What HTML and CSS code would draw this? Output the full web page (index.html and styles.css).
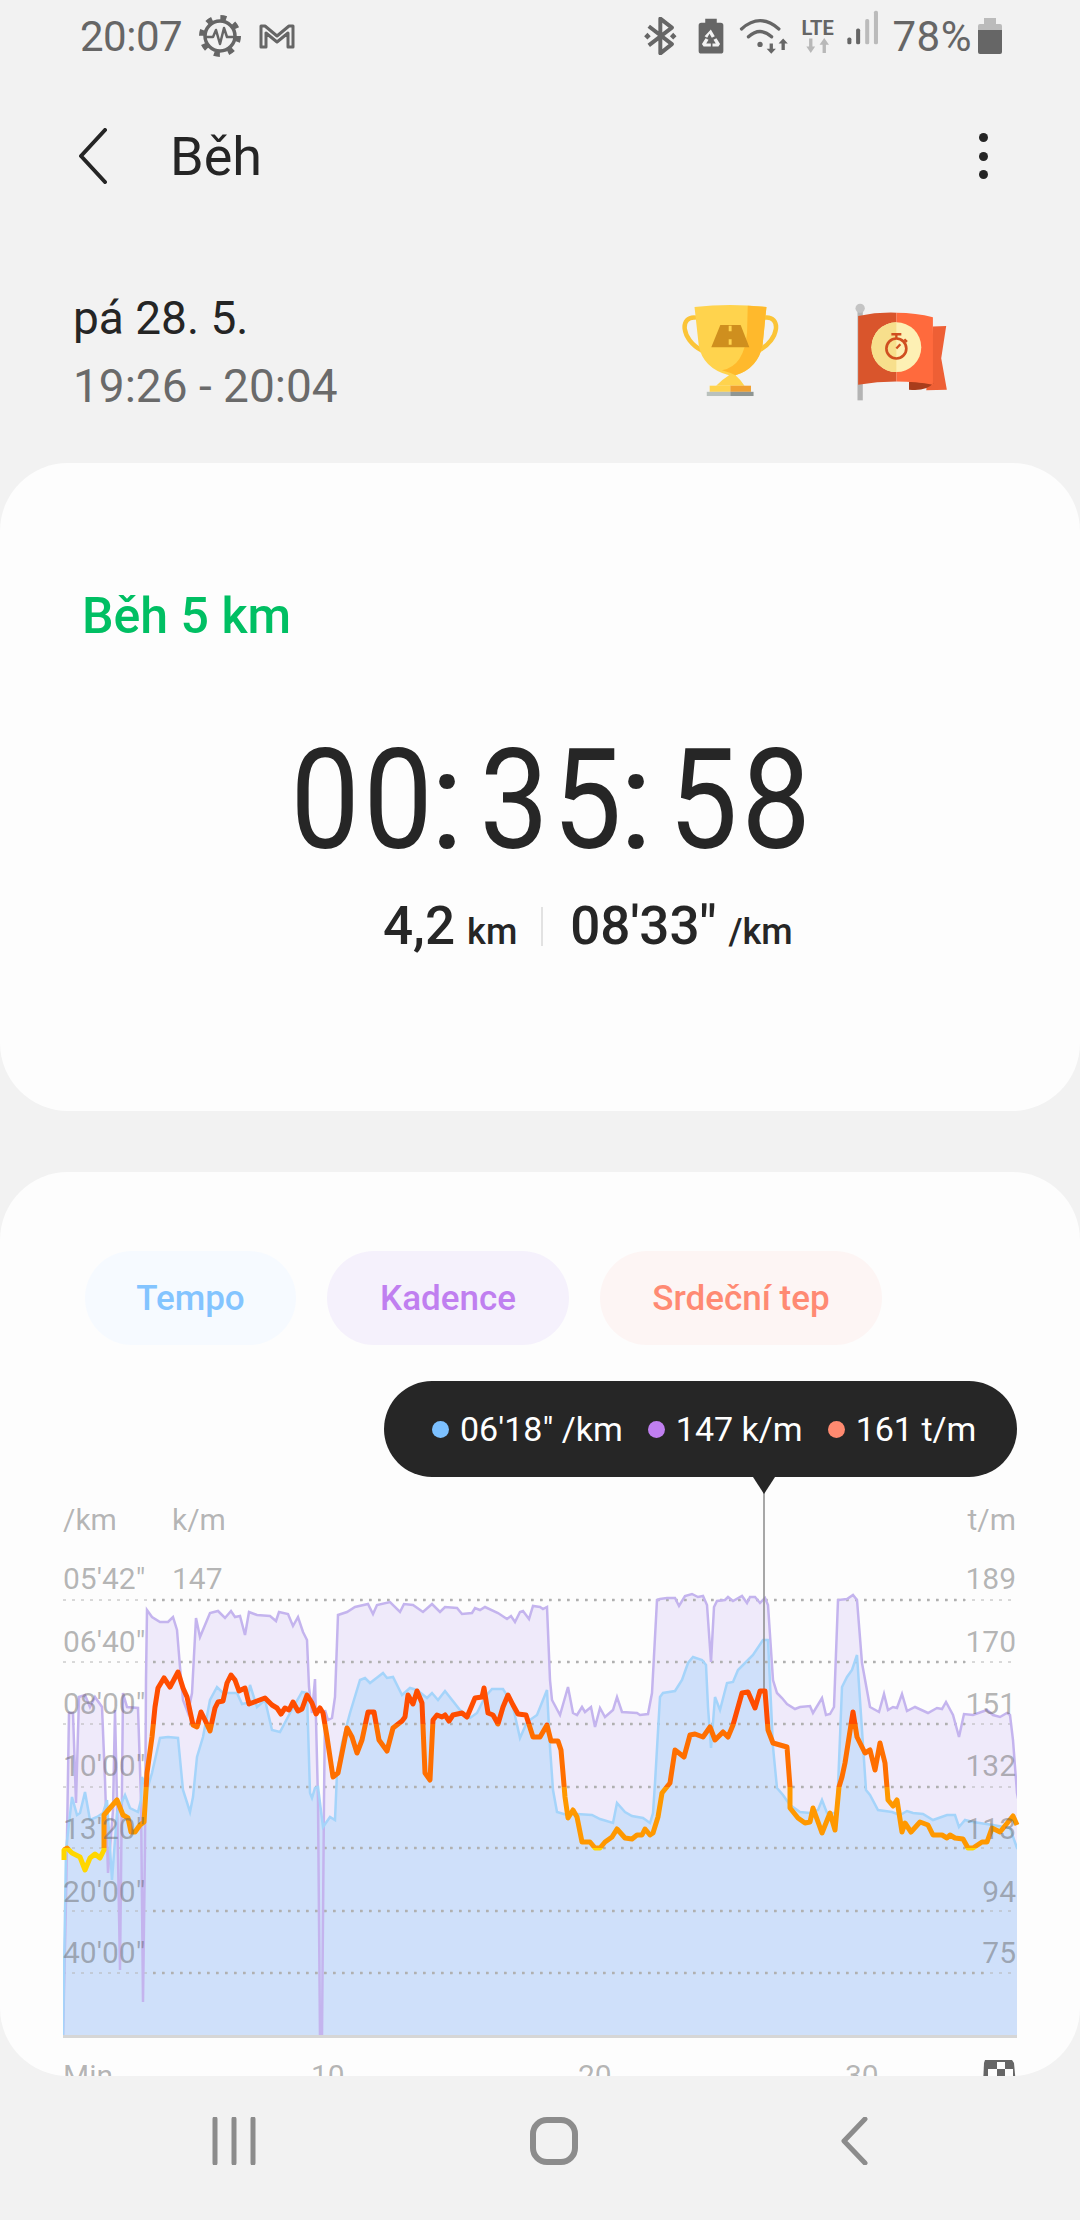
FILE: index.html
```html
<!DOCTYPE html>
<html lang="cs">
<head>
    <meta charset="UTF-8">
    <meta name="viewport" content="width=device-width, initial-scale=1.0">
    <title>Běh</title>
    <link rel="stylesheet" href="styles.css">
</head>
<body>
    <div class="status-bar">
        <div class="status-group">
            <span class="status-time">20:07</span>
            <svg class="icon-gear" viewBox="0 0 44 44">
                <circle cx="22" cy="22" r="15" fill="none" stroke="#666" stroke-width="3.5"/>
                <circle cx="22" cy="22" r="18.5" fill="none" stroke="#666" stroke-width="5" stroke-dasharray="6 8.5"/>
                <polyline points="7,23 15,23 18,16 22,30 26,14 29,23 37,23" fill="none" stroke="#666" stroke-width="2.5" stroke-linejoin="round"/>
            </svg>
            <svg class="icon-mail" viewBox="0 0 36 26">
                <path d="M2 24V3h4l12 10L30 3h4v21h-5V10L18 19 7 10v14z" fill="none" stroke="#666" stroke-width="3" stroke-linejoin="round"/>
            </svg>
        </div>
        <div class="status-group status-right">
            <svg class="icon-bt" viewBox="105 50 105 115">
                <path d="M125 78 195 132 160 160V55L195 82 125 136" fill="none" stroke="#666" stroke-width="12" stroke-linejoin="round"/>
                <path d="M111 108l10-10 10 10-10 10zM189 108l10-10 10 10-10 10z" fill="#666"/>
            </svg>
            <svg class="icon-saver" viewBox="270 50 85 115">
                <path d="M295 55h35v12h12q8 0 8 8v78q0 8-8 8h-59q-8 0-8-8V75q0-8 8-8h12z" fill="#666"/>
                <path d="M312 88l12 20-9 5-7-12-7 12-8-5zM285 132l11-18 9 5-7 11h14v9h-22zM340 132l-11-18-9 5 7 11h-10v9h18z" fill="#f2f2f2"/>
            </svg>
            <svg class="icon-wifi" viewBox="400 50 150 115">
                <g fill="none" stroke="#666" stroke-width="10" stroke-linecap="round">
                    <path d="M407 86Q463 36 520 86"/>
                    <path d="M428 110Q463 78 498 110"/>
                </g>
                <circle cx="463" cy="133" r="8" fill="#666"/>
                <path d="M492 130h10v16h9l-14 15-14-15h9zM528 150h10v-20h9l-14-15-14 15h9z" fill="#666"/>
            </svg>
            <div class="status-lte">
                <span class="lte-label">LTE</span>
                <svg class="icon-lte" viewBox="595 118 80 50">
                    <path d="M610 122h10v24h8l-13 19-13-19h8zM650 165h10v-24h9l-14-20-14 20h9z" fill="#b8b8b8"/>
                </svg>
            </div>
            <svg class="icon-signal" viewBox="725 58 95 104">
                <rect x="726" y="140" width="12" height="20" rx="5" fill="#666"/>
                <rect x="752" y="113" width="12" height="47" rx="5" fill="#666"/>
                <rect x="779" y="85" width="12" height="75" rx="5" fill="#bbb"/>
                <rect x="805" y="60" width="12" height="100" rx="5" fill="#bbb"/>
            </svg>
            <span class="status-percent">78%</span>
            <svg class="icon-battery" viewBox="0 0 24 36">
                <path d="M6 0h12v6h4q2 0 2 2v4H0V8q0-2 2-2h4z" fill="#bbb"/>
                <path d="M0 12h24v22q0 2-2 2H2q-2 0-2-2z" fill="#666"/>
            </svg>
        </div>
    </div>

    <div class="app-bar">
        <div class="app-bar-left">
            <svg class="icon-back" viewBox="0 0 30 56">
                <polyline points="27,2 3,28 27,54" fill="none" stroke="#252525" stroke-width="4" stroke-linecap="round" stroke-linejoin="round"/>
            </svg>
            <h1 class="app-title">Běh</h1>
        </div>
        <div class="more-menu">
            <span class="more-dot"></span>
            <span class="more-dot"></span>
            <span class="more-dot"></span>
        </div>
    </div>

    <div class="summary-row">
        <div class="summary-date">
            <div class="date-day">pá 28. 5.</div>
            <div class="date-time">19:26 - 20:04</div>
        </div>
        <div class="badges">
            <svg class="badge" viewBox="110 55 310 310">
                <path d="M160 105C108 98 112 172 178 207M372 105C424 98 420 172 354 207" fill="none" stroke="#fbc437" stroke-width="14"/>
                <path d="M155 72Q265 60 378 72L366 190Q352 262 282 284 300 300 310 316H222Q240 298 262 284 180 262 168 190Z" fill="#ffd34d"/>
                <path d="M320 68 378 72 366 190Q352 262 282 284 266 275 240 268 310 255 318 150Z" fill="#ffb92c"/>
                <rect x="202" y="316" width="64" height="19" fill="#ffd34d"/>
                <rect x="266" y="316" width="64" height="19" fill="#f0a030"/>
                <rect x="193" y="335" width="73" height="13" fill="#b9c1bd"/>
                <rect x="266" y="335" width="72" height="13" fill="#8f9693"/>
                <path d="M235 128h63l27 69H207z" fill="#cf8f1e"/>
                <path d="M261 130h9v17h-9zM261 172h9v17h-9z" fill="#ffd34d"/>
            </svg>
            <svg class="badge" viewBox="640 50 300 310">
                <rect x="653" y="85" width="16" height="267" fill="#b4b4b4"/>
                <circle cx="661" cy="75" r="14" fill="#c4c4c4"/>
                <path d="M880 130 920 128 905 225 922 320 860 322Z" fill="#ee5f35"/>
                <path d="M808 295V320Q860 326 882 300Z" fill="#a83d1c"/>
                <path d="M655 98Q712 86 770 88V295Q712 295 655 305Z" fill="#d9552c"/>
                <path d="M770 88Q830 88 880 102V305Q830 295 770 295Z" fill="#ff6a3d"/>
                <circle cx="770" cy="192" r="75" fill="#fdf0b4"/>
                <path d="M770 117a75 75 0 0 0 0 150z" fill="#f7df8c"/>
                <circle cx="770" cy="196" r="30" fill="none" stroke="#d04f20" stroke-width="8"/>
                <path d="M755 153h30M770 153v14M794 168l8 8M770 196l12-13" fill="none" stroke="#d04f20" stroke-width="7"/>
            </svg>
        </div>
    </div>

    <div class="card result-card">
        <div class="result-title">Běh 5 km</div>
        <div class="clock">
            <span class="clock-digit">0</span><span class="clock-digit">0</span><span class="clock-sep">:</span><span class="clock-digit">3</span><span class="clock-digit">5</span><span class="clock-sep">:</span><span class="clock-digit">5</span><span class="clock-digit">8</span>
        </div>
        <div class="result-stats">
            <span class="stat-value">4,2</span>
            <span class="stat-unit">km</span>
            <span class="stat-divider"></span>
            <span class="stat-value">08'33"</span>
            <span class="stat-unit">/km</span>
        </div>
    </div>

    <div class="card chart-card">
        <div class="pills">
            <div class="pill pill-tempo">Tempo</div>
            <div class="pill pill-cadence">Kadence</div>
            <div class="pill pill-heart">Srdeční tep</div>
        </div>

        <div class="chart-tooltip">
            <div class="tooltip-item"><span class="tooltip-dot dot-tempo"></span>06'18" /km</div>
            <div class="tooltip-item"><span class="tooltip-dot dot-cadence"></span>147 k/m</div>
            <div class="tooltip-item"><span class="tooltip-dot dot-heart"></span>161 t/m</div>
        </div>

        <!-- viewBox uses page coordinates so the traced points stay readable -->
        <svg class="chart" viewBox="0 1480 1080 620">
            <defs>
                <clipPath id="plot-clip"><rect x="63" y="1480" width="954" height="558"/></clipPath>
                <linearGradient id="heart-gradient" gradientUnits="userSpaceOnUse" x1="0" y1="1600" x2="0" y2="1900">
                    <stop offset="0.4133" stop-color="#ff4d00"/>
                    <stop offset="0.4133" stop-color="#ff6f00"/>
                    <stop offset="0.6233" stop-color="#ff6f00"/>
                    <stop offset="0.6233" stop-color="#ff9800"/>
                    <stop offset="0.8267" stop-color="#ff9800"/>
                    <stop offset="0.8267" stop-color="#ffd600"/>
                </linearGradient>
                <polygon id="cadence-shape" points="63,2037 66,1900 69,1713 73,1713 76,1803 79,1697 85,1695 90,1707 95,1697 102,1707 105,1780 108,1873 113,1810 115,1710 117,1800 120,1970 123,1693 127,1707 138,1708 141,1800 143,2002 145,1847 146,1680 147,1610 152,1617 160,1622 168,1622 173,1617 177,1630 180,1667 183,1700 188,1713 192,1693 196,1618 200,1637 210,1613 218,1611 225,1618 231,1611 235,1617 240,1616 245,1635 249,1612 257,1615 270,1616 276,1621 279,1612 288,1614 293,1626 298,1617 303,1632 307,1640 309,1687 312,1713 315,1679 318,1800 320,2037 322,2037 324,1800 325,1710 328,1720 332,1718 335,1697 338,1615 347,1612 355,1607 368,1604 373,1614 377,1605 390,1602 400,1612 404,1604 413,1605 423,1612 432,1604 440,1612 445,1607 457,1608 462,1614 472,1613 475,1608 480,1610 485,1607 498,1613 507,1619 511,1616 515,1622 520,1612 523,1611 529,1619 533,1606 540,1607 543,1609 547,1607 550,1680 552,1700 560,1715 568,1687 573,1713 577,1715 582,1707 585,1712 591,1707 595,1727 600,1708 605,1717 613,1710 617,1697 622,1712 637,1713 640,1715 648,1714 652,1693 657,1600 660,1599 667,1598 675,1598 679,1606 685,1596 692,1594 698,1597 703,1596 707,1605 711,1662 714,1607 717,1601 725,1600 728,1597 733,1601 742,1596 747,1603 750,1597 755,1597 760,1603 765,1598 768,1605 773,1680 777,1693 782,1698 787,1704 795,1709 800,1707 810,1706 813,1713 822,1698 826,1715 830,1714 834,1707 838,1600 847,1599 853,1595 857,1600 862,1663 870,1707 879,1712 884,1694 888,1710 893,1707 897,1708 902,1694 907,1711 915,1707 928,1713 937,1708 942,1709 946,1702 953,1715 959,1737 964,1714 973,1715 987,1710 993,1715 1000,1717 1007,1713 1010,1715 1013,1740 1017,1793 1030,1860 1030,2050 50,2050 50,2037"/>
                <polygon id="tempo-shape" points="63,2037 66,1850 72,1797 77,1815 80,1813 85,1792 90,1820 97,1817 103,1813 107,1800 112,1880 117,1813 125,1795 130,1808 138,1812 141,1800 142,1777 147,1790 152,1773 160,1738 168,1737 178,1738 183,1790 190,1812 193,1797 197,1757 203,1737 210,1700 217,1687 223,1693 237,1693 242,1704 247,1703 250,1685 257,1707 265,1700 272,1730 280,1732 290,1713 302,1692 307,1693 310,1793 312,1798 315,1788 318,1787 323,1827 330,1817 335,1820 337,1773 342,1743 350,1713 360,1680 365,1678 370,1683 383,1673 387,1678 393,1677 402,1695 410,1688 417,1690 427,1698 432,1693 438,1700 445,1691 460,1710 470,1718 477,1713 485,1697 492,1689 503,1689 508,1697 513,1707 520,1738 527,1722 537,1715 547,1690 550,1747 553,1790 557,1812 567,1815 577,1814 592,1815 600,1819 613,1823 617,1803 625,1812 632,1816 643,1818 650,1823 653,1813 655,1783 660,1697 663,1693 675,1691 682,1680 688,1663 693,1657 702,1660 706,1665 708,1707 711,1748 715,1697 720,1710 727,1683 733,1682 738,1670 753,1655 763,1640 768,1640 773,1747 777,1788 783,1795 790,1805 800,1812 810,1813 818,1810 822,1800 827,1813 836,1813 838,1787 842,1687 847,1677 852,1670 857,1655 862,1730 866,1790 870,1795 878,1810 892,1812 900,1815 907,1811 913,1813 923,1814 933,1820 947,1815 955,1815 959,1827 965,1820 973,1822 993,1825 1010,1828 1017,1848 1030,1860 1030,2050 50,2050 50,2037"/>
            </defs>

            <g clip-path="url(#plot-clip)">
                <use href="#cadence-shape" class="area-cadence"/>
                <use href="#tempo-shape" class="area-tempo"/>
            </g>

            <g class="grid-fine">
                <line x1="63" x2="1017" y1="1600" y2="1600"/>
                <line x1="63" x2="1017" y1="1662" y2="1662"/>
                <line x1="63" x2="1017" y1="1724" y2="1724"/>
                <line x1="63" x2="1017" y1="1787" y2="1787"/>
                <line x1="63" x2="1017" y1="1848" y2="1848"/>
                <line x1="63" x2="1017" y1="1911" y2="1911"/>
                <line x1="63" x2="1017" y1="1973" y2="1973"/>
            </g>
            <g class="grid-dots">
                <line x1="153" x2="965" y1="1600" y2="1600"/>
                <line x1="153" x2="965" y1="1662" y2="1662"/>
                <line x1="153" x2="965" y1="1724" y2="1724"/>
                <line x1="153" x2="965" y1="1787" y2="1787"/>
                <line x1="153" x2="965" y1="1848" y2="1848"/>
                <line x1="153" x2="985" y1="1911" y2="1911"/>
                <line x1="153" x2="985" y1="1973" y2="1973"/>
            </g>

            <g clip-path="url(#plot-clip)">
                <use href="#cadence-shape" class="line-cadence"/>
                <use href="#tempo-shape" class="line-tempo"/>
            </g>

            <rect class="chart-base" x="63" y="2035" width="954" height="3"/>
            <line class="chart-cursor" x1="764" x2="764" y1="1490" y2="1692"/>

            <polyline class="line-heart" points="64,1860 64,1850 67,1848 72,1853 80,1857 85,1870 90,1858 95,1854 100,1858 104,1850 104,1815 110,1808 117,1800 123,1815 128,1818 131,1832 135,1832 140,1825 144,1822 146,1790 147,1773 152,1737 155,1707 158,1688 164,1678 170,1687 178,1672 183,1688 187,1697 193,1725 197,1727 201,1712 205,1720 210,1731 215,1708 218,1702 223,1701 227,1683 231,1675 235,1680 239,1691 245,1688 249,1704 265,1698 272,1705 277,1708 281,1714 285,1708 289,1710 293,1702 298,1711 302,1709 307,1695 312,1703 316,1714 320,1708 323,1713 327,1737 333,1777 338,1773 347,1728 352,1737 357,1753 362,1740 368,1712 374,1712 379,1740 387,1751 393,1728 402,1721 405,1717 408,1695 413,1704 417,1691 422,1703 425,1773 430,1780 433,1720 437,1715 442,1717 445,1715 449,1721 453,1715 462,1713 467,1717 475,1698 482,1697 484,1688 488,1713 493,1715 498,1724 503,1707 508,1695 513,1705 518,1714 526,1715 533,1737 540,1737 547,1725 551,1741 558,1741 561,1750 563,1773 565,1797 568,1818 573,1810 577,1817 582,1842 590,1842 595,1848 600,1848 605,1842 612,1837 617,1829 625,1838 632,1839 637,1835 642,1835 645,1829 650,1835 653,1833 658,1817 662,1793 670,1783 675,1750 684,1757 690,1735 695,1734 703,1737 710,1727 715,1740 723,1732 728,1737 733,1725 742,1693 748,1692 755,1708 760,1691 765,1691 768,1730 773,1743 787,1747 790,1787 790,1808 798,1818 805,1823 810,1822 813,1808 822,1833 830,1813 835,1830 839,1787 842,1777 845,1763 853,1712 857,1737 865,1753 870,1750 875,1770 880,1743 885,1763 888,1800 893,1806 897,1800 902,1832 905,1823 911,1832 920,1822 928,1825 933,1835 942,1835 947,1838 950,1835 955,1838 963,1839 968,1848 973,1848 982,1842 987,1842 992,1828 1000,1832 1013,1816 1017,1825"/>

            <g class="axis-text">
                <text x="63" y="1530">/km</text>
                <text x="63" y="1589">05'42"</text>
                <text x="63" y="1652">06'40"</text>
                <text x="63" y="1714">08'00"</text>
                <text x="63" y="1776">10'00"</text>
                <text x="63" y="1839">13'20"</text>
                <text x="63" y="1902">20'00"</text>
                <text x="63" y="1963">40'00"</text>
                <text x="172" y="1530">k/m</text>
                <text x="172" y="1589">147</text>
            </g>
            <g class="axis-text axis-right">
                <text x="1016" y="1530">t/m</text>
                <text x="1016" y="1589">189</text>
                <text x="1016" y="1652">170</text>
                <text x="1016" y="1714">151</text>
                <text x="1016" y="1776">132</text>
                <text x="1016" y="1839">113</text>
                <text x="1016" y="1902">94</text>
                <text x="1016" y="1963">75</text>
            </g>
            <g class="axis-text">
                <text x="63" y="2086">Min</text>
                <text x="311" y="2086">10</text>
                <text x="578" y="2086">20</text>
                <text x="845" y="2086">30</text>
            </g>
            <path d="M985 2060h27l2 3 2 22h-33l1-22z" fill="#666"/>
            <path d="M997 2062h8v7h-8zM988 2069h9v7h-9zM1005 2069h8v7h-8z" fill="#fdfdfd"/>
        </svg>
    </div>

    <div class="nav-bar">
        <svg class="nav-icon" viewBox="0 0 46 48">
            <path d="M3 2V46M22 2V46M41 2V46" fill="none" stroke="#8c8c8c" stroke-width="5" stroke-linecap="round"/>
        </svg>
        <svg class="nav-icon" viewBox="0 0 48 48">
            <rect x="3" y="3" width="42" height="42" rx="14" fill="none" stroke="#8c8c8c" stroke-width="6"/>
        </svg>
        <svg class="nav-icon" viewBox="0 0 28 48">
            <polyline points="24,2 3,24 24,46" fill="none" stroke="#8c8c8c" stroke-width="5" stroke-linecap="round" stroke-linejoin="round"/>
        </svg>
    </div>
</body>
</html>
```

FILE: styles.css
```css
* {
    margin: 0;
    padding: 0;
    box-sizing: border-box;
    font-family: Roboto, "Noto Sans", sans-serif;
}

body {
    background-color: #f2f2f2;
    width: 1080px;
    height: 2220px;
    overflow: hidden;
}

.status-bar {
    display: flex;
    justify-content: space-between;
    align-items: center;
    height: 72px;
    padding: 0 78px 0 80px;
    color: #666;
}

.status-group {
    display: flex;
    align-items: center;
}

.status-time {
    font-size: 42px;
    letter-spacing: -0.5px;
}

.icon-gear {
    width: 44px;
    height: 44px;
    margin-left: 16px;
}

.icon-mail {
    width: 36px;
    height: 26px;
    margin-left: 17px;
}

.icon-bt {
    width: 35px;
    height: 38px;
}

.icon-saver {
    width: 28px;
    height: 38px;
    margin-left: 20px;
}

.icon-wifi {
    width: 50px;
    height: 38px;
    margin-left: 14px;
}

.status-lte {
    display: flex;
    flex-direction: column;
    align-items: center;
    width: 36px;
    margin-left: 11px;
}

.lte-label {
    font-size: 20px;
    font-weight: 700;
    line-height: 18px;
}

.icon-lte {
    width: 27px;
    height: 17px;
}

.icon-signal {
    width: 32px;
    height: 35px;
    margin-left: 11px;
    align-self: flex-end;
    margin-bottom: 17px;
}

.status-percent {
    font-size: 42px;
    margin-left: 14px;
    letter-spacing: 0.5px;
}

.icon-battery {
    width: 24px;
    height: 36px;
    margin-left: 6px;
}

.app-bar {
    display: flex;
    justify-content: space-between;
    align-items: center;
    height: 168px;
    padding: 0 92px 0 78px;
}

.app-bar-left {
    display: flex;
    align-items: center;
}

.icon-back {
    width: 30px;
    height: 56px;
}

.app-title {
    font-size: 54px;
    font-weight: 400;
    color: #252525;
    margin-left: 62px;
}

.more-menu {
    display: flex;
    flex-direction: column;
    gap: 9.5px;
}

.more-dot {
    width: 9px;
    height: 9px;
    border-radius: 50%;
    background-color: #252525;
}

.summary-row {
    display: flex;
    justify-content: space-between;
    align-items: center;
    height: 223px;
    padding: 0 127px 0 73px;
}

.date-day,
.date-time {
    font-size: 46px;
    line-height: 68px;
}

.date-day {
    color: #252525;
}

.date-time {
    color: #6a6a6a;
}

.badges {
    display: flex;
    gap: 73px;
}

.badge {
    width: 100px;
    height: 103px;
}

.card {
    background-color: #fdfdfd;
    border-radius: 68px;
    overflow: hidden;
}

.result-card {
    height: 648px;
    padding-top: 123px;
    margin-bottom: 61px;
}

.result-title {
    font-size: 50px;
    font-weight: 500;
    line-height: 60px;
    color: #00bf63;
    padding-left: 82px;
}

.clock {
    display: flex;
    height: 100px;
    margin-top: 104px;
    padding-left: 287px;
    font-size: 140px;
    line-height: 100px;
    color: #262626;
}

.clock-digit {
    display: block;
    width: 58px;
    text-align: center;
    transform: scaleX(0.88);
}

.clock-digit + .clock-digit {
    margin-left: 15px;
}

.clock-sep {
    display: block;
    width: 58px;
    text-align: center;
}

.result-stats {
    display: flex;
    align-items: baseline;
    height: 60px;
    margin-top: 46px;
    padding-left: 383px;
    color: #262626;
}

.stat-value {
    font-size: 53px;
    font-weight: 500;
    line-height: 60px;
}

.stat-unit {
    font-size: 36px;
    font-weight: 500;
    margin-left: 12px;
}

.stat-divider {
    align-self: center;
    width: 2px;
    height: 39px;
    background-color: #e2e2e2;
    margin: 0 27px 0 24px;
}

.chart-card {
    position: relative;
    height: 904px;
    padding-top: 79px;
}

.pills {
    display: flex;
    gap: 31px;
    padding-left: 85px;
}

.pill {
    display: flex;
    align-items: center;
    justify-content: center;
    height: 94px;
    border-radius: 47px;
    font-size: 35px;
    font-weight: 500;
}

.pill-tempo {
    width: 211px;
    background-color: #f6faff;
    color: #83c4ff;
}

.pill-cadence {
    width: 242px;
    background-color: #f5f1fc;
    color: #c07ff0;
}

.pill-heart {
    width: 282px;
    background-color: #fdf5f4;
    color: #ff8a73;
}

.chart-tooltip {
    position: absolute;
    top: 209px;
    left: 384px;
    display: flex;
    align-items: center;
    gap: 25px;
    width: 633px;
    height: 96px;
    padding-left: 48px;
    border-radius: 48px;
    background-color: #262626;
    color: #ffffff;
    font-size: 34px;
}

.chart-tooltip::after {
    content: "";
    position: absolute;
    left: 369px;
    top: 96px;
    border-left: 11px solid transparent;
    border-right: 11px solid transparent;
    border-top: 17px solid #262626;
}

.tooltip-item {
    display: flex;
    align-items: center;
    gap: 11px;
}

.tooltip-dot {
    width: 17px;
    height: 17px;
    border-radius: 50%;
}

.dot-tempo {
    background-color: #7cc0ff;
}

.dot-cadence {
    background-color: #c07ff0;
}

.dot-heart {
    background-color: #ff8a70;
}

.chart {
    display: block;
    width: 1080px;
    height: 620px;
    margin-top: 135px;
}

.area-cadence {
    fill: #efeafa;
}

.area-tempo {
    fill: #cfe0fa;
}

.line-cadence {
    fill: none;
    stroke: #c4b4ee;
    stroke-width: 2.5;
}

.line-tempo {
    fill: none;
    stroke: #a5d4fa;
    stroke-width: 2.5;
}

.line-heart {
    fill: none;
    stroke: url(#heart-gradient);
    stroke-width: 5;
    stroke-linejoin: round;
}

.grid-fine line {
    stroke: #b4b4b4;
    stroke-width: 1;
    stroke-dasharray: 3 6;
}

.grid-dots line {
    stroke: #b0b0b0;
    stroke-width: 2.5;
    stroke-dasharray: 2.5 6.5;
}

.chart-base {
    fill: #d6d6d6;
}

.chart-cursor {
    stroke: #8a8a8a;
    stroke-width: 1.5;
}

.axis-text text {
    font-size: 30px;
    fill: rgba(100, 100, 100, 0.47);
}

.axis-right text {
    text-anchor: end;
}

.nav-bar {
    display: flex;
    justify-content: center;
    align-items: center;
    gap: 0;
    height: 144px;
    padding-bottom: 14px;
}

.nav-icon {
    height: 48px;
    width: 48px;
}

.nav-icon:nth-child(1) {
    margin-right: 271px;
}

.nav-icon:nth-child(3) {
    width: 28px;
    margin-left: 263px;
}
```
